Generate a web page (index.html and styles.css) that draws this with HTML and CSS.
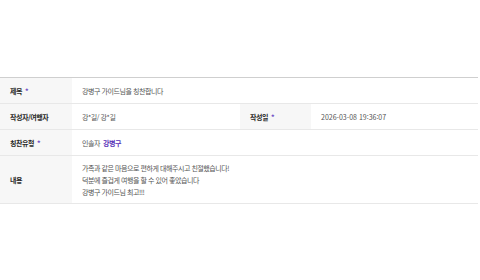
FILE: index.html
```html
<!DOCTYPE html>
<html lang="ko">
<head>
<meta charset="utf-8">
<link rel="stylesheet" href="styles.css">
</head>
<body>
<div class="page">
  <div class="table">
    <div class="row">
      <div class="th">제목 <span class="req">*</span></div>
      <div class="td span3">강병구 가이드님을 칭찬합니다</div>
    </div>
    <div class="row">
      <div class="th">작성자/여행자</div>
      <div class="td">강*길/ 강*길</div>
      <div class="th">작성일 <span class="req">*</span></div>
      <div class="td date">2026-03-08 19:36:07</div>
    </div>
    <div class="row">
      <div class="th">칭찬유형 <span class="req">*</span></div>
      <div class="td span3">인솔자 <b class="name">강병구</b></div>
    </div>
    <div class="row tall">
      <div class="th">내용</div>
      <div class="td span3 content">
        <p>가족과 같은 마음으로 편하게 대해주시고 친절했습니다!</p>
        <p>덕분에 즐겁게 여행을 할 수 있어 좋았습니다</p>
        <p>강병구 가이드님 최고!!!</p>
      </div>
    </div>
  </div>
</div>
</body>
</html>
```
FILE: styles.css
```css
html, body { margin: 0; padding: 0; background: #fff; }
body { font-family: "Noto Sans CJK KR", "Noto Sans", sans-serif; font-size: 7px; color: #555; letter-spacing: -0.45px; }
.page { padding-top: 77px; width: 478px; }
.table { border-top: 1px solid #cfcfcf; }
.row { display: grid; grid-template-columns: 72px 168px 71px 1fr; border-bottom: 1px solid #e8e8e8; height: 25px; }
.row.tall { height: 47px; }
.th { background: #f7f7f7; color: #2a2a2a; font-weight: 700; display: flex; align-items: center; padding-left: 10px; gap: 3px; }
.td { display: flex; align-items: center; padding-left: 10px; }
.date { letter-spacing: 0; }
.span3 { grid-column: span 3; }
.req { color: #6a4bc4; font-weight: 700; }
.name { color: #5a32b8; font-weight: 700; margin-left: 3px; }
.content { flex-direction: column; align-items: flex-start; justify-content: center; }
.content p { margin: 0; line-height: 12px; }
```
